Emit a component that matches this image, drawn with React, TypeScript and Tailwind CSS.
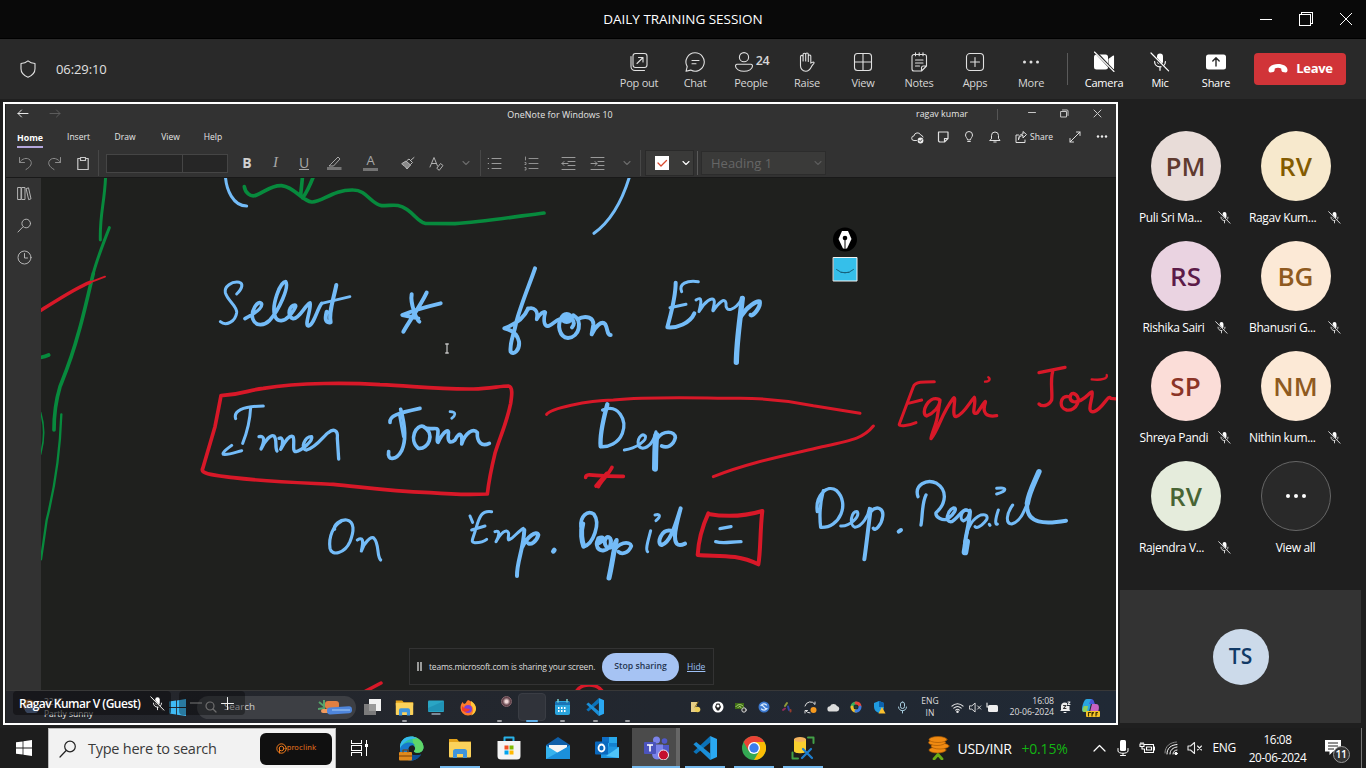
import React from "react";

type P = { children?: React.ReactNode; className?: string };

const Cell = ({ children, className = "" }: P) => (
  <div className={`flex h-full shrink-0 items-center justify-center ${className}`}>{children}</div>
);

const Svg = ({ s = 20, vb = 20, c = "#e0e0e0", w = 1.1, children }: { s?: number; vb?: number; c?: string; w?: number; children: React.ReactNode }) => (
  <svg width={s} height={s} viewBox={`0 0 ${vb} ${vb}`} fill="none" stroke={c} strokeWidth={w} strokeLinecap="round" strokeLinejoin="round" className="block shrink-0">
    {children}
  </svg>
);

const MicOff = ({ s = 20, w = 1.2 }: { s?: number; w?: number }) => (
  <Svg s={s} c="#fff" w={w}>
    <rect x="7" y="1.6" width="6" height="10.6" rx="3" fill="#fff" stroke="none" />
    <path d="M4.6 9.5c0 3.2 2.4 5.3 5.4 5.3s5.4-2.1 5.4-5.3M10 15v3.3" />
    <path d="M2 2.2 17.2 19" stroke="#292929" strokeWidth="2.6" />
    <path d="M1 1 18.6 18.8" />
  </Svg>
);

const Chevron = ({ c = "#6b6b6b", s = 8 }: { c?: string; s?: number }) => (
  <Svg s={s} vb={8} c={c} w={1.1}><path d="M1 2.5 4 5.5 7 2.5" /></Svg>
);

const VsCode = ({ s }: { s: number }) => (
  <svg width={s} height={s} viewBox="0 0 24 24" className="block shrink-0">
    <path d="M17.2 0v6.5L3.2 17.9 0.4 15.8z" fill="#0b72b8" />
    <path d="M17.2 24v-6.5L3.2 6.1.4 8.2z" fill="#1b8fd8" />
    <path d="M17.2 0 24 3v18l-6.800 3z" fill="#2aa8f2" />
  </svg>
);

const Folder = ({ s }: { s: number }) => (
  <svg width={s} height={s} viewBox="0 0 24 24" className="block shrink-0">
    <path d="M1 3h8l2 2.5h12v4H1z" fill="#e3a21a" />
    <rect x="1" y="6" width="22" height="15.5" rx="1" fill="#fbd25b" />
    <path d="M5 22v-6.500q0-2.500 2.500-2.500h9q2.500 0 2.500 2.500V22h-4v-4H9v4z" fill="#3f95dc" />
  </svg>
);

const WinLogo = ({ s, c }: { s: number; c: string }) => (
  <svg width={s} height={s} viewBox="0 0 16 16" fill={c} className="block shrink-0">
    <path d="M0 2.300 6.600 1.400v6.200H0zM7.400 1.300 16 0v7.600H7.400zM0 8.400h6.600v6.200L0 13.700zM7.400 8.400H16V16l-8.600-1.200z" />
  </svg>
);

/* ---------- Meeting toolbar ---------- */

const tools: { label: string; icon: React.ReactNode; extra?: string }[] = [
  { label: "Pop out", icon: <Svg><rect x="4" y="1.500" width="14" height="14" rx="2.500" /><path d="M2 4.500v10A4 4 0 0 0 6 18.500h9.500M8 11.500 14 5.500M9.500 5.500H14V10" /></Svg> },
  { label: "Chat", icon: <Svg><path d="M10 .8a9.200 9.200 0 1 1-4.300 17.300L1 19.300l1.200-4.700A9.200 9.200 0 0 1 10 .8zM7 8.500h7M7 11.800h4" /></Svg> },
  { label: "People", extra: "24", icon: <Svg><circle cx="10" cy="5.200" r="4.600" /><path d="M3 12.200h14a1.600 1.600 0 0 1 1.500 1.800c0 3.200-4 5.300-8.500 5.300s-8.500-2.100-8.500-5.300A1.600 1.600 0 0 1 3 12.200z" /></Svg> },
  { label: "Raise", icon: <Svg><path d="M5 11V4.700a1.300 1.300 0 0 1 2.600 0V9 2.600a1.300 1.300 0 0 1 2.600 0V9 2.300a1.300 1.300 0 0 1 2.600 0V9.500 4a1.300 1.300 0 0 1 2.500 0v7.200c1-.9 2.700-1.500 3.300-.7.500.8-1.500 2.100-2.400 3.700-1.400 3-2.900 5-6 5-3.500 0-5.200-2.800-5.200-5.500z" transform="translate(-1.500 0)" /></Svg> },
  { label: "View", icon: <Svg><rect x="1.500" y="1.500" width="17" height="17" rx="3" /><path d="M10 1.500v17M1.500 10h17" /></Svg> },
  { label: "Notes", icon: <Svg><path d="M5 2.500h10.500a2 2 0 0 1 2 2V14l-5 5H5a2 2 0 0 1-2-2V4.500a2 2 0 0 1 2-2zM17.500 14h-3a2 2 0 0 0-2 2v3M6.500 .8v3M10.200 .8v3M14 .8v3M6.500 8h7.500M6.500 11h7.500M6.500 14h4" /></Svg> },
  { label: "Apps", icon: <Svg><rect x="1.500" y="1.500" width="17" height="17" rx="3.500" /><path d="M10 5.500v9M5.500 10h9" /></Svg> },
  { label: "More", icon: <Svg><g fill="#e0e0e0" stroke="none"><circle cx="3.500" cy="10" r="1.500" /><circle cx="10" cy="10" r="1.500" /><circle cx="16.500" cy="10" r="1.500" /></g></Svg> },
];

const Tool = ({ label, icon, extra, bright }: { label: string; icon: React.ReactNode; extra?: string; bright?: boolean }) => (
  <div className={`flex w-14 shrink-0 flex-col items-center ${bright ? "text-white" : "text-[#d6d6d6]"}`}>
    <div className="flex h-5 items-center gap-[2px]">
      {extra ? <span className="-ml-[3px]">{icon}</span> : icon}
      {extra && <span className="-mr-1 text-[12.5px] font-semibold tracking-[-0.3px]">{extra}</span>}
    </div>
    <span className="mt-[3px] whitespace-nowrap text-[11px] leading-4 tracking-[-0.25px]">{label}</span>
  </div>
);

const TopBars = () => (
  <>
    <header className="flex h-[39px] shrink-0 items-center border-b border-black bg-[#090909]">
      <div className="w-[120px]" />
      <div className="flex-1 text-center text-[13.500px] tracking-[-0.020px] text-white"><span>DAILY TRAINING SESSION</span></div>
      <div className="flex w-[120px] items-center">
        <Cell className="w-10"><Svg s={12} vb={12} c="#fff" w={1}><path d="M0 6.500h12" /></Svg></Cell>
        <Cell className="w-10"><svg width="14" height="14" fill="none" stroke="#fff" shapeRendering="crispEdges"><rect x=".5" y="2.500" width="11" height="11" /><path d="M2.500 2.500V.5h11v11h-2" /></svg></Cell>
        <Cell className="w-10"><Svg s={12} vb={12} c="#fff" w={1}><path d="M0 0 12 12M12 0 0 12" /></Svg></Cell>
      </div>
    </header>
    <div className="flex h-[60px] shrink-0 items-center bg-[#292929]">
      <div className="flex w-[611px] items-center pl-[18px]">
        <Svg><path d="M10 1.800c2.200 1.900 4.400 2.500 7 2.700v5.300c0 4.200-2.800 6.800-7 8.400-4.200-1.600-7-4.200-7-8.400V4.500c2.600-.2 4.800-.8 7-2.700z" /></Svg>
        <span className="ml-[18px] pt-px text-[13px] tracking-[-0.100px] text-[#e0e0e0]">06:29:10</span>
      </div>
      <div className="flex pt-1">
        {tools.map((t) => <Tool key={t.label} {...t} />)}
      </div>
      <div className="ml-2 mr-2 h-8 w-px bg-[#5a5a5a]" />
      <div className="flex pt-1">
        <Tool bright label="Camera" icon={<Svg s={22} vb={22} c="#fff"><rect x="1" y="3.500" width="14" height="15" rx="2.500" fill="#fff" stroke="none" /><path d="M16 8.200 20.500 5v12.500L16 14z" fill="#fff" /><path d="M3 1.500 21.500 21" stroke="#292929" strokeWidth="2.600" /><path d="M1.500 1 21 20.500" /></Svg>} />
        <Tool bright label="Mic" icon={<MicOff />} />
        <Tool bright label="Share" icon={<Svg s={22} vb={22} c="#292929" w={1.4}><rect x="1" y="3.500" width="20" height="15" rx="2.500" fill="#fff" stroke="none" /><path d="M11 15V7M7.800 10 11 6.800 14.200 10" /></Svg>} />
      </div>
      <button className="ml-[10px] flex h-8 w-[92px] items-center justify-center gap-2 rounded bg-[#d13438] pl-px text-[13px] font-bold tracking-[-0.300px] text-white">
        <svg width="20" height="10" viewBox="0 0 20 10"><path d="M10 0c5 0 9.500 2.300 9.500 6 0 1.600-.8 2.600-2 2.400l-2.700-.5c-.9-.2-1.300-.9-1.400-1.700l-.2-1.800c-2-.8-4.400-.8-6.400 0l-.2 1.800c-.1.800-.5 1.500-1.400 1.700l-2.700.5C1.300 8.600.5 7.600.5 6 .5 2.300 5 0 10 0z" fill="#fff" /></svg>
        Leave
      </button>
    </div>
  </>
);

/* ---------- Ink ---------- */

const BLUE = "#74bcf8";
const RED = "#d81828";
const GREEN = "#078a3d";
const K = 1 / 3;

const Ink = () => (
  <svg viewBox="41 178 1075 512" width="1075" height="512" className="block" fill="none" strokeLinecap="round" strokeLinejoin="round">
    <g transform={`translate(0 170) scale(${K})`}>
      <g stroke={GREEN} strokeWidth="11">
        <path strokeWidth="9" d="M317 15C314 100 299 130 301 210M328 173C310 220 290 270 280 310" />
        <path d="M280 310C265 370 250 440 235 490C215 565 200 600 180 650C165 700 162 740 162 780" />
        <path strokeWidth="7" d="M184 733C180 850 160 970 140 1050L123 1168" />
        <path d="M115 563C130 562 136 560 146 555" />
        <path strokeWidth="5" d="M122 728Q140 785 122 852" />
        <path d="M733 50C735 65 750 84 770 75C795 65 815 45 845 47C885 52 905 92 935 96C965 98 1000 58 1060 60C1100 60 1110 100 1145 107C1180 107 1195 100 1220 118C1245 135 1255 155 1275 160L1365 161C1450 155 1560 138 1632 129M908 15L902 75M942 15Q925 60 908 84" />
      </g>
      <path stroke={RED} strokeWidth="10" d="M118 424C180 385 230 352 270 337" />
      <path stroke={RED} strokeWidth="6" d="M270 337L315 320" />
      <g stroke={BLUE} strokeWidth="9">
        <path d="M676 15C678 60 700 108 740 108M1890 15C1865 100 1830 155 1782 190" />
        <path strokeWidth="9" d="M710 372C728 355 730 340 718 337C695 333 672 350 676 368C682 392 712 408 710 428C706 455 678 470 661 455" />
        <path strokeWidth="11" d="M735 446C765 430 790 412 784 400C774 388 750 425 759 448C768 472 795 465 808 452C838 420 868 350 857 335C840 335 815 405 824 435C832 462 855 452 868 438C892 410 890 402 880 406C865 415 862 440 880 446C900 445 915 405 930 399C935 415 912 466 925 468C942 465 952 415 965 400" />
        <path strokeWidth="12" d="M1009 345C1000 390 985 430 992 457C975 460 975 445 980 425" />
        <path strokeWidth="8" d="M965 400L1050 380" />
        <path strokeWidth="9" d="M707 746C700 725 725 708 790 708M752 712C750 750 740 790 728 820M695 826C680 838 665 848 670 853C690 855 710 845 725 842" />
        <path strokeWidth="10" d="M777 800C796 796 793 815 783 837C794 812 812 793 822 798C832 808 824 830 831 843M837 805C852 799 849 825 842 838C855 812 870 794 879 800C886 812 874 845 888 845C905 842 940 812 935 800C915 798 898 838 920 840C950 832 972 796 985 788C1000 775 1015 780 1012 805L1016 867" />
      </g>
      <path stroke={RED} strokeWidth="11" d="M663 677C730 673 745 660 790 655C900 637 1050 638 1140 644C1240 648 1300 658 1420 657C1470 656 1500 648 1525 648C1540 650 1535 680 1532 700C1520 760 1500 800 1485 850Q1468 920 1462 972Q1390 976 1290 968C1150 962 1080 950 1000 943C900 938 800 935 700 923C640 915 600 912 608 896L645 770Q655 720 663 677" />
    </g>
    <g transform={`translate(380 240) scale(${K})`}>
      <g stroke={BLUE} strokeWidth="12">
        <path d="M95 163C90 190 110 240 118 245M140 158C120 200 90 240 70 275M182 190C140 200 90 215 67 225L115 235" />
        <path d="M465 85C450 130 420 200 408 250C400 290 388 310 392 335C400 347 420 330 417 305C412 282 395 270 373 265C400 255 430 240 444 206" />
        <path strokeWidth="11" d="M444 206C462 200 476 212 470 238C480 220 492 212 496 217C488 245 494 261 506 258C520 252 526 242 538 238" />
        <path d="M545 232C530 255 538 292 564 294C598 292 610 242 580 226M575 236C585 245 582 256 576 262M592 238C620 222 642 235 640 255L635 283C645 260 665 240 676 253C685 270 680 285 692 285" />
        <ellipse cx="560" cy="234" rx="20" ry="18" fill={BLUE} stroke="none" />
        <path d="M887 128C887 175 870 230 862 262C890 265 930 250 943 220" />
        <path strokeWidth="9" d="M905 155C895 132 920 120 955 125M870 203L918 193" />
        <path strokeWidth="9" d="M948 180C970 165 962 195 957 215C970 190 1000 163 1003 185C1003 200 995 215 1000 212C1015 190 1035 170 1038 190C1035 220 1065 212 1085 178" />
        <path strokeWidth="16" d="M1087 175C1080 240 1070 300 1069 367" />
        <path strokeWidth="13" d="M1084 228C1100 200 1130 182 1139 185C1143 200 1120 230 1112 225" />
        <path strokeWidth="11" d="M30 547C28 528 50 520 120 505M62 508C75 555 80 600 65 632C50 660 20 665 26 635" />
        <path strokeWidth="8" d="M58 525L70 590" />
        <path strokeWidth="11" d="M132 560C108 550 85 600 115 625C145 630 168 580 130 560C150 575 175 555 174 575C174 590 168 605 174 607C190 575 210 560 205 585C203 605 210 612 225 600C240 570 248 585 245 612C255 580 280 562 292 578C290 605 305 622 328 610" />
        <path strokeWidth="8" d="M210 515C232 515 225 528 215 535" />
        <path strokeWidth="13" d="M682 493C675 520 658 580 662 619" />
        <path strokeWidth="10" d="M668 510C715 490 742 540 727 580C715 610 685 622 662 620" />
        <path strokeWidth="9" d="M733 630C770 625 802 600 796 588C780 572 760 620 788 625C810 622 822 600 828 575" />
        <path strokeWidth="18" d="M829 585C825 620 826 650 825 686" />
        <path strokeWidth="11" d="M832 595C850 570 885 572 886 593C880 618 860 625 845 618" />
        <path strokeWidth="9" d="M270 828L278 847M335 815C305 810 298 830 288 865C278 900 270 906 285 908C300 908 312 905 320 898M275 870L315 858" />
        <path strokeWidth="9" d="M345 875C362 868 357 890 348 905C362 880 380 862 386 880C385 900 380 905 395 895C405 887 420 870 430 865" />
        <path d="M433 870C430 930 410 965 411 1008M425 925C440 890 470 870 475 885C470 905 452 915 445 910" />
        <path strokeWidth="14" d="M520 934L523 930" />
        <path strokeWidth="15" d="M608 852C601 875 606 905 611 918" />
        <path strokeWidth="11" d="M611 920C640 912 662 850 642 823C622 808 600 830 603 860" />
        <path d="M650 912C672 905 675 885 655 895C640 925 665 945 690 920C700 888 677 882 674 905C675 932 700 928 710 900" />
        <path strokeWidth="15" d="M708 905C700 940 695 980 687 1014" />
        <path strokeWidth="11" d="M700 940C712 905 750 902 754 918C745 940 725 945 715 935" />
        <path strokeWidth="9" d="M812 872C805 900 795 930 803 935M825 825C842 820 842 830 828 842" />
        <path strokeWidth="12" d="M872 872C845 865 828 912 845 915C875 905 890 840 902 805C890 850 865 935 915 911" />
        <path strokeWidth="10" d="M1020 866L1053 860M1007 905C1030 912 1050 905 1083 905" />
      </g>
      <g stroke={RED} strokeWidth="11">
        <path d="M617 712C618 697 640 710 730 709" />
        <path strokeWidth="11" d="M696 682C685 705 665 720 655 740" />
        <path strokeWidth="11" d="M680 700L648 738" />
        <path strokeWidth="9" d="M500 523C510 505 620 482 700 480C830 468 960 475 1080 475C1180 475 1240 485 1300 497L1440 520M1000 710C1100 670 1200 650 1320 622C1420 600 1450 595 1480 558" />
        <path strokeWidth="12" d="M985 820C962 870 955 910 953 945C1010 950 1070 940 1135 973C1142 940 1140 870 1147 813C1090 830 1030 830 985 822" />
      </g>
    </g>
    <g transform={`translate(740 220) scale(${K})`}>
      <g stroke={RED} strokeWidth="10">
        <path strokeWidth="9" d="M583 485C550 485 525 485 520 500L478 612C475 620 500 620 528 608M505 550L545 540" />
        <path d="M597 538C565 525 540 580 560 588C580 580 600 560 600 540L592 590C590 610 575 640 573 656C595 630 605 580 640 535C652 522 632 590 648 590C670 585 690 545 703 532C710 550 690 590 712 578C725 560 740 535 736 548C725 580 740 592 770 587" />
        <path strokeWidth="7" d="M735 485C750 485 752 475 745 472" />
        <path d="M897 458L975 442M938 455C930 480 938 520 935 540C925 560 905 560 897 552" />
        <path d="M985 530C960 525 955 565 980 570C1010 575 1030 530 1000 520C990 520 985 540 1000 545C1030 550 1048 515 1056 516C1062 530 1035 580 1062 575C1090 565 1105 520 1112 535L1140 538" />
        <path strokeWidth="7" d="M1055 478C1085 482 1105 475 1100 465" />
      </g>
      <g stroke={BLUE} strokeWidth="10">
        <path d="M250 812C240 850 238 890 242 922C300 925 330 850 290 812C260 790 225 830 232 875" />
        <path strokeWidth="9" d="M302 918C330 920 360 890 352 875C335 870 325 915 345 922C365 920 385 890 388 865" />
        <path strokeWidth="12" d="M392 868C385 920 380 970 373 1018" />
        <path d="M392 875C410 855 432 865 428 890C425 915 405 935 400 925" />
        <path strokeWidth="12" d="M476 935L483 930" />
        <path strokeWidth="10" d="M558 825C545 850 548 890 543 915" />
        <path strokeWidth="10" d="M534 830C522 795 560 775 590 790C622 810 620 850 588 878C585 892 610 905 625 895C640 885 655 862 640 864C622 872 612 908 635 905C655 895 668 862 684 872" />
        <path strokeWidth="9" d="M684 872C666 862 656 900 670 903C680 900 690 885 690 870" />
        <path strokeWidth="12" d="M690 875C688 920 672 960 675 980" />
        <path strokeWidth="20" d="M680 965L675 996" />
        <path strokeWidth="9" d="M678 950C682 920 700 895 722 885C745 880 745 895 735 905C720 922 710 925 705 920" />
        <path d="M748 913L750 916M775 870C765 900 765 915 772 912M770 805C800 800 805 812 770 822" strokeWidth="9" />
        <path d="M818 855C800 880 795 910 815 912C840 905 850 880 862 850" strokeWidth="9" />
        <path d="M897 755C882 790 866 820 862 850" strokeWidth="16" />
        <path d="M862 850C855 915 920 912 978 902" strokeWidth="12" />
      </g>
    </g>
    <g transform={`translate(300 500) scale(${K})`} stroke={BLUE} strokeWidth="9.500">
      <path d="M104 88C100 75 120 58 140 60C165 65 162 95 150 125C135 160 95 170 90 145C85 110 100 75 125 63M172 120C188 110 192 120 184 153C190 130 215 105 222 115C238 130 230 170 242 180" />
    </g>
    <path stroke={RED} strokeWidth="3.500" d="M364 692L381 683M575 694C580 682 598 682 604 694" />
    <path stroke="#e8e8e8" strokeWidth="1" d="M445.500 344h1.500h1.500M447 344v9M445.500 353h3" />
    <circle cx="845" cy="239.500" r="12" fill="#000" />
    <path d="M842 231h6l3.500 8-4.500 9.500h-4l-4.500-9.500z" fill="#fff" />
    <circle cx="845" cy="238" r="2.300" fill="#000" /><path d="M845 239v9" stroke="#000" />
    <rect x="833.500" y="257.500" width="23.500" height="23.500" fill="#35bfea" stroke="#f2f2f2" />
    <path d="M836.500 269.500q8.500 7 17 0M841 272.500h8" stroke="#17627e" />
  </svg>
);

/* ---------- Shared screen: OneNote ---------- */

const Lines = ({ kind }: { kind: "bullet" | "num" | "out" | "in" }) => (
  <Svg s={15} vb={15} c="#9a9a9a" w={1}>
    {kind === "bullet" && <path d="M5 2.500h9M5 7.500h9M5 12.500h9M1.200 2.500h.4M1.200 7.500h.4M1.200 12.500h.4" />}
    {kind === "num" && <path d="M5 2.500h9M5 7.500h9M5 12.500h9M1.500 1v3M1 6.500h1v2H1M1 11.500h1v2.500H1" strokeWidth=".9" />}
    {kind === "out" && <path d="M1 1.500h13M7 5.500h7M7 9.500h7M1 13.500h13M1 7.500h6M3 5.500 1 7.500l2 2" />}
    {kind === "in" && <path d="M1 1.500h13M8 5.500h6M8 9.500h6M1 13.500h13M1 7.500h6M5 5.500l2 2-2 2" />}
  </Svg>
);

const Ribbon = () => (
  <div className="flex h-[74px] shrink-0 flex-col border-b border-[#191919] bg-[#323232] text-[8.500px] text-[#e6e6e6]">
    <div className="flex h-[20px] items-center">
      <Cell className="w-[33px]"><Svg s={12} vb={12} c="#e6e6e6" w={1}><path d="M1 5.500h10M4.500 2 1 5.500 4.500 9" /></Svg></Cell>
      <Cell className="w-[31px]"><Svg s={12} vb={12} c="#5c5c5c" w={1}><path d="M1 5.500h10M7.500 2 11 5.500 7.500 9" /></Svg></Cell>
      <div className="w-[370px]" />
      <Cell className="w-[240px] whitespace-nowrap pt-[2px] text-[8.900px] tracking-[0.050px]">OneNote for Windows 10</Cell>
      <div className="w-[232px]" />
      <Cell className="w-[60px] whitespace-nowrap pt-[2px] text-[8.800px] tracking-[0.050px]">ragav kumar</Cell>
      <div className="h-[11px] w-[26px] border-r border-[#555]" />
      <div className="w-[17px]" />
      <Cell className="w-[33px] pb-[2px]"><Svg s={8} vb={8} c="#c8c8c8" w={1}><path d="M.5 3.500h7" /></Svg></Cell>
      <Cell className="w-[33px] pb-[2px]"><Svg s={9} vb={9} c="#c8c8c8" w={1}><rect x="1" y="2.500" width="5.500" height="5.500" /><path d="M2.500 1H7q1 0 1 1v4.500" /></Svg></Cell>
      <Cell className="w-[33px] pb-[2px]"><Svg s={9} vb={9} c="#c8c8c8" w={1}><path d="M1 1l7 7M8 1 1 8" /></Svg></Cell>
    </div>
    <div className="flex h-[26px] items-center text-[8.500px]">
      <Cell className="w-12"><span className="mt-[4px] border-b-2 border-[#b4a6dc] text-[8.800px] font-bold leading-[16px] text-white">Home</span></Cell>
      <Cell className="w-[49px] pt-px">Insert</Cell>
      <Cell className="w-11 pt-px">Draw</Cell>
      <Cell className="w-[47px] pt-px">View</Cell>
      <Cell className="w-[38px] pt-px">Help</Cell>
      <div className="flex-1" />
      <Cell className="w-[26px]"><Svg s={13} vb={13} w={1}><path d="M5.500 9.500H3a2.300 2.300 0 0 1 0-4.600A3.500 3.500 0 0 1 9.700 4 2.700 2.700 0 0 1 12 6" /><circle cx="9.500" cy="9.500" r="2.900" fill="#eee" stroke="none" /><path d="m8.200 9.500 1 1 1.600-1.800" stroke="#333" /></Svg></Cell>
      <Cell className="w-[26px]"><Svg s={12} vb={12} w={1.2}><path d="M1.500 1h9.500v6.500L7.500 11h-5L1.500 10zM7.500 11V7.500H11" /></Svg></Cell>
      <Cell className="w-[26px]"><Svg s={12} vb={12} w={1}><path d="M4.500 8.500C4.300 7 2.500 6 2.500 4a3.500 3.500 0 0 1 7 0c0 2-1.800 3-2 4.500zM4.700 10.500h2.600" /></Svg></Cell>
      <Cell className="w-[26px]"><Svg s={12} vb={12} w={1}><path d="M1 9.500h10L9.500 7.500V4.500a3.500 3.500 0 0 0-7 0v3zM4.800 11h2.400" /></Svg></Cell>
      <Cell className="w-[52px] gap-[3px] text-[8.500px]"><Svg s={12} vb={12} w={1}><path d="M3.500 4H1v7.500h9V9M3.500 8.500C4 5.500 6 4.500 8 4.500V7l3.500-3.500L8 .5V3C5 3 3.500 5.500 3.500 8.500z" /></Svg><span>Share</span></Cell>
      <Cell className="w-[30px]"><Svg s={12} vb={12} w={1}><path d="M1 11 11 1M7.500 1H11v3.500M1 7.500V11h3.500" /></Svg></Cell>
      <Cell className="w-[24px]"><Svg s={12} vb={12} w={1}><g fill="#eee" stroke="none"><circle cx="2" cy="5.500" r="1.200" /><circle cx="6" cy="5.500" r="1.200" /><circle cx="10" cy="5.500" r="1.200" /></g></Svg></Cell>
      <div className="w-[2px]" />
    </div>
    <div className="flex h-[26px] items-center">
      <Cell className="w-[39px]"><Svg s={15} vb={15} c="#8c8c8c" w={1}><path d="M1.500 1.500v5h5M1.500 6.500C4 2.500 9 1 12 4c3 3.300.5 7-4 9.500" /></Svg></Cell>
      <Cell className="w-[19px]"><Svg s={15} vb={15} c="#8c8c8c" w={1}><path d="M13.500 1.500v5h-5M13.500 6.500C11 2.500 6 1 3 4c-3 3.300-.5 7 4 9.500" /></Svg></Cell>
      <Cell className="ml-[3px] w-8 border-r border-[#474747]"><Svg s={14} vb={14} c="#c8c8c8" w={1.2}><path d="M4 2.500H1.800v11h10.400v-11H10M4.500 1.500h5v3h-5z" /></Svg></Cell>
      <div className="ml-[7px] flex h-[19px] w-[122px] border border-[#454545] bg-[#262626]"><div className="w-[76px] border-r border-[#454545]" /></div>
      <Cell className="w-[38px] pb-[2px] text-[14px] font-bold text-[#d0d0d0]">B</Cell>
      <Cell className="w-[19px] pb-[2px] text-[15px] italic text-[#a8a8a8]"><span className="font-['Liberation_Serif']">I</span></Cell>
      <Cell className="w-[38px] text-[14px] text-[#a8a8a8]"><span className="border-b border-[#a8a8a8] leading-[13px]">U</span></Cell>
      <Cell className="w-[22px]"><Svg s={16} vb={16} c="#a8a8a8" w={1}><path d="M5 9 12 2l2 2-6.500 7H3.500z" /><rect x="1" y="12" width="14.500" height="3" fill="#747474" stroke="none" /></Svg></Cell>
      <Cell className="w-[51px] text-[#a8a8a8]"><div className="flex h-[15px] w-[15px] items-end justify-center border-b-[3px] border-[#747474] pb-[2px] text-[13px] leading-[11px]">A</div></Cell>
      <Cell className="w-6"><Svg s={14} vb={14} c="#bcbcbc" w={1}><path d="M1 7.500 5 5l4.500 4L6 13 4.500 11 3.500 10 2 9z" fill="#8a8a8a" /><path d="M6 4.500 8 3l3.500 3.500-2 2M9.500 4.500 13 1.500" /></Svg></Cell>
      <Cell className="w-8"><Svg s={15} vb={15} c="#b0b0b0" w={1}><path d="M1 11 5 1.500 8.500 10M2.500 7.500h5M8 12l3.500-4.500 2.500 2-3.500 4.500z" /></Svg></Cell>
      <Cell className="w-[29px] border-r border-[#474747]"><Chevron /></Cell>
      <Cell className="w-[27px]"><Lines kind="bullet" /></Cell>
      <Cell className="w-[46px]"><Lines kind="num" /></Cell>
      <Cell className="w-[28px]"><Lines kind="out" /></Cell>
      <Cell className="w-[31px]"><Lines kind="in" /></Cell>
      <Cell className="w-[28px] border-r border-[#474747]"><Chevron /></Cell>
      <div className="ml-[4px] flex h-[26px] w-[49px] items-center justify-between border border-[#2a2a2a] bg-[#3a3a39] pl-[9px] pr-[3px]">
        <Svg s={14} vb={14} c="#d8492e" w={1.3}><rect width="14" height="14" fill="#fff" stroke="none" /><path d="M3 7l3 3 5.500-5.500" /></Svg>
        <Chevron c="#fff" s={8} />
      </div>
      <div className="ml-[3px] h-6 w-px bg-[#5a5a5a]" />
      <div className="ml-[3px] flex h-6 w-[125px] items-center justify-between border border-[#2c2c2c] bg-[#3a3a39] pl-[9px] pr-[3px] text-[13px] text-[#666]"><span className="pt-px">Heading 1</span><Chevron c="#5c5c5c" /></div>
    </div>
  </div>
);

const trayA = [
  <Svg key="a" s={12} vb={12} w={1}><path d="M2 1h6v3l-1 2v5H2z" fill="#e7cf86" stroke="none" /><circle cx="8.500" cy="8.500" r="2.800" fill="#eed05a" stroke="none" /><path d="M9 1 6 6" stroke="#9a7b20" /></Svg>,
  <Svg key="b" s={12} vb={12} w={1}><circle cx="6" cy="6" r="5.500" fill="#fff" stroke="none" /><path d="M4.500 2.500h3L9 6 7 9.500H5L3 6z" fill="#222" stroke="none" /><circle cx="6" cy="5" r="1.500" fill="#fff" stroke="none" /></Svg>,
  <Svg key="c" s={12} vb={12} w={1} c="#b8e080"><path d="M0 2h9v6H0z" fill="#3f6d16" stroke="none" /><path d="M1 5.500C3 3 6 3 8 5M3 6.500c1-1.500 3-1.500 3 0" /><circle cx="9" cy="9" r="2.200" stroke="#d8d8d8" fill="#333" /></Svg>,
  <Svg key="d" s={12} vb={12} w={1.2} c="#d8ebff"><circle cx="6" cy="6" r="5.500" fill="#3c79cf" stroke="none" /><path d="M3 4.500a4 4 0 0 1 5.500-.5M9 7.500a4 4 0 0 1-5.500.5M4 4l4 4" /></Svg>,
  <Svg key="e" s={12} vb={12} w={2}><path d="M4 5 6 2" stroke="#8f9a3a" /><path d="M2 9 4 7.500" stroke="#8f2a5a" /><path d="M7 5.500 8 9" stroke="#2f44a7" /><path d="M9.500 9v1.500" stroke="#963c2c" /></Svg>,
  <Svg key="f" s={13} vb={13} w={1}><path d="M1 5a5.500 5.500 0 0 1 10-1.500V1M1 12V9.500h2.500M1.500 9.500A5 5 0 0 0 6 12" /><circle cx="9.500" cy="9" r="3" fill="#f79a1e" stroke="none" /></Svg>,
  <Svg key="g" s={13} vb={13} c="none"><path d="M3 10.500a2.600 2.600 0 0 1 0-5.200A4 4 0 0 1 10 5a2.800 2.800 0 0 1 0 5.500z" fill="#dcdcdc" /></Svg>,
  <Svg key="h" s={12} vb={12} w={3}><path d="M6 2a4 4 0 0 0-4 4" stroke="#35b05a" /><path d="M2 6a4 4 0 0 0 4 4" stroke="#f2c12b" /><path d="M6 2a4 4 0 0 1 4 3" stroke="#e6453a" /><path d="M6 10a4 4 0 0 0 4-4" stroke="#3c7ee0" /><circle cx="6" cy="6" r="1.500" fill="#243" stroke="none" /></Svg>,
  <Svg key="i" s={13} vb={13} c="none"><path d="M6 0 11 2v4c0 3-2 5-5 6-3-1-5-3-5-6V2z" fill="#1f9be0" /><path d="M6 0 11 2v4H6z" fill="#0b62ad" /><path d="m9 6 3.500 6.500h-7z" fill="#fbc02d" /></Svg>,
  <Svg key="j" s={13} vb={13} w={1} c="#a9cfe0"><rect x="4.500" y="1" width="4" height="6.500" rx="2" /><path d="M2.500 6c0 5 8 5 8 0M6.500 9.800V12" /></Svg>,
];

const Wifi = ({ s = 14 }: { s?: number }) => <Svg s={s} vb={14} w={1.1} c="#e8e8e8"><path d="M1 5.500c3.500-3.500 8.500-3.500 12 0M3 7.700c2.500-2.300 5.500-2.300 8 0M5 9.800c1.200-1.100 2.800-1.100 4 0" /><circle cx="7" cy="11.500" r=".8" fill="#eee" /></Svg>;
const VolOff = ({ s = 13 }: { s?: number }) => <Svg s={s} vb={16} w={1.1} c="#e8e8e8"><path d="M1 6h2.500L7.500 2.500v11L3.500 10H1zM10.500 6l4 4M14.500 6l-4 4" /></Svg>;

const SharedTaskbar = () => (
  <div className="relative flex h-[33px] shrink-0 items-center border-t border-[#383838] bg-[linear-gradient(90deg,#25262b,#22272f_60%,#202935)] text-[8.500px] text-[#dedede]">
    <Cell className="w-[35px] pl-[14px]"><Svg s={18} vb={18} c="none"><circle cx="7" cy="7.500" r="6" fill="#ff9a3a" /><path d="M5 15a4 4 0 0 1 1-7.500c2-3 6-2 7 1a3.200 3.200 0 0 1 0 6.500z" fill="#86acec" /></Svg></Cell>
    <div className="w-[121px] pl-[3px] pt-[2px] leading-[12px] text-[#f0f0f0]"><div>32°C</div><div>Partly sunny</div></div>
    <Cell className="w-[31px]"><WinLogo s={17} c="#3fbaf4" /></Cell>
    <div className="ml-[4px] flex h-[23px] w-[159px] items-center gap-[7px] rounded-full bg-[#3d3f44] px-2 text-[9.800px] text-[#d0d0d0]">
      <Svg s={12} vb={12} c="#aaa" w={1.2}><circle cx="5" cy="5" r="4" /><path d="m8 8 3 3" /></Svg><span className="pt-px">Search</span>
      <svg width="34" height="17" viewBox="0 0 34 17" className="ml-auto -mr-1"><path d="M1 3 7 8M6 1v7M0 10l7-1" stroke="#55a36a" strokeWidth="2" /><rect x="7" y="2" width="14" height="8" rx="3" fill="#e07f42" /><rect x="3" y="10" width="10" height="4" rx="2" fill="#f09a5e" /><rect x="9" y="8" width="25" height="7" rx="3" fill="#4f86dc" transform="rotate(-4 20 11)" /><path d="M14 11h18" stroke="#a8cdf7" /></svg>
    </div>
    <Cell className="w-8"><Svg s={17} vb={17} c="none"><path d="M5 0h12v12H5z" fill="#f2f2f2" /><path d="M0 5h12v11H0z" fill="#8b8b8b" opacity=".85" /></Svg></Cell>
    <Cell className="relative w-8"><Folder s={19} /><i className="absolute bottom-[1px] h-[2px] w-[5px] rounded bg-[#9a9ca0]" /></Cell>
    <Cell className="w-8"><Svg s={16} vb={16} c="none"><rect y="1.500" width="16" height="11.500" rx="1" fill="#2aa5c4" /><path d="M0 9 16 2v10H0z" fill="#1a87ad" opacity=".6" /><path d="M4 15h8" stroke="#9ab" strokeWidth="1.300" /></Svg></Cell>
    <Cell className="w-8"><Svg s={17} vb={17} c="none"><path d="M8 1c5 2 8 5 8 9a7.800 7.800 0 0 1-15.500-1c0-3 1-4.500 2-6l1.500 2L6 4c0-1 1-2 2-3z" fill="#ff7a2a" /><path d="M11 2c4 3 5 5 5 8a7.500 7.500 0 0 1-5 6.500c3-4 3-8 0-10z" fill="#ffc83a" /><circle cx="8" cy="10" r="4" fill="#7b41d8" /><path d="M2 7c3 4 6 2 8 3-1 3-6 4-8 1z" fill="#f6392d" /></Svg></Cell>
    <Cell className="relative w-[33px] items-start pl-[11px] pt-[5px]"><span className="h-[11px] w-[11px] rounded-full border border-[#86666d] bg-[radial-gradient(circle,#f0d8d8_20%,#604048_60%)]" /><i className="absolute bottom-[1px] left-[13px] h-[2px] w-[5px] rounded bg-[#9a9ca0]" /></Cell>
    <Cell className="relative w-[29px]"><span className="h-[28px] w-[28px] rounded-sm border border-[#3a3d44] bg-[#30333a]" /><i className="absolute bottom-[1px] h-[2px] w-3 rounded bg-[#5caee8]" /></Cell>
    <Cell className="relative w-[33px]"><Svg s={17} vb={17} c="none"><rect x="1" y="2" width="15" height="14" rx="2" fill="#2aa4dc" /><path d="M1 3h15v3H1z" fill="#1a73b4" /><path d="M4 0v3M13 0v3" stroke="#7cc" strokeWidth="1.500" /><path d="M4 9h9M4 12h9" stroke="#fff" strokeWidth="1.800" strokeDasharray="1.500 1.500" strokeLinecap="butt" /></Svg><i className="absolute bottom-[1px] h-[2px] w-[5px] rounded bg-[#9a9ca0]" /></Cell>
    <Cell className="relative w-8"><VsCode s={18} /><i className="absolute bottom-[1px] h-[2px] w-[5px] rounded bg-[#9a9ca0]" /></Cell>
    <Cell className="relative w-8"><i className="absolute bottom-[1px] h-[2px] w-[5px] rounded bg-[#9a9ca0]" /></Cell>
    <div className="w-[40px]" />
    {trayA.map((t, i) => <Cell key={i} className="w-[23.100px]">{t}</Cell>)}
    <div className="w-[32px] text-center text-[8.500px] leading-[12px]"><div>ENG</div><div>IN</div></div>
    <Cell className="ml-[3px] w-[18px]"><Wifi s={13} /></Cell>
    <Cell className="w-[18px]"><VolOff s={13} /></Cell>
    <Cell className="w-[16px]"><Svg s={13} vb={13} c="none"><rect x="2" y="4" width="10" height="7" rx="1.500" fill="#eee" /><path d="M1 2v4h4" stroke="#eee" /></Svg></Cell>
    <div className="w-[53px] whitespace-nowrap text-right text-[8.700px] leading-[11.500px] tracking-[-0.1px]"><div>16:08</div><div>20-06-2024</div></div>
    <Cell className="w-[23px]"><Svg s={12} vb={12} c="none"><path d="M2 9V5a4 4 0 0 1 6-3v3h2.500v4l1 1H1z" fill="#eee" /><path d="M4.500 4.500h2.500l-2.500 3h2.500" stroke="#333" /><path d="M9 1h2l-2 2.500h2M5 11.500h2" stroke="#eee" /></Svg></Cell>
    <Cell className="w-[27px]"><Svg s={19} vb={19} c="none"><path d="M6 1h5L8 14H3C0 14 1 9 2 6c1-3 2-5 4-5z" fill="#29a6e0" /><path d="M10 1c3 0 3 3 4 5H8z" fill="#4c55d8" /><path d="M11 6h4c4 0 3 5 2 8H9z" fill="#c961c2" /><path d="M3 8h4l-1 6H3c-2 0-2-3 0-6z" fill="#8fd05a" /><rect x="5" y="13" width="14" height="6" rx="1" fill="#f5c227" /><path d="M7.500 18v-3.500h2M11 18v-3.500h1.500L11.500 16M15 18v-3.500h1.500M15 16h1" stroke="#3a2f00" /></Svg></Cell>
    <div className="absolute left-[7px] top-0 flex h-6 w-[158px] items-center rounded bg-[#101012]/65 pl-[6px] text-white">
      <span className="w-[131px] whitespace-nowrap pt-px text-[12px] font-semibold tracking-[-0.5px]">Ragav Kumar V (Guest)</span><MicOff s={15} />
    </div>
    <div className="absolute left-[173px] top-0 flex h-6 w-[66px] items-center justify-between rounded bg-black/35 px-[11px]">
      <Svg s={12} vb={12} c="#777" w={1}><path d="M0 6h12" /></Svg>
      <Svg s={13} vb={13} c="#f0f0f0" w={1}><path d="M.5 6.500h12M6.500.5v12" /></Svg>
    </div>
  </div>
);

const SharedScreen = () => (
  <div className="ml-[3px] mt-[3px] flex h-[623px] w-[1115px] shrink-0 flex-col border-2 border-white bg-[#1f201e] pl-px">
    <Ribbon />
    <div className="relative flex h-[512px] shrink-0">
      <div className="flex w-[35px] shrink-0 flex-col items-center gap-[17px] bg-[#323232] pl-[2px] pt-2">
        <Svg s={15} vb={15} c="#b4b4b4" w={1}><path d="M1 1.500h3v12H1zM5 1.500h3v12H5zM9.500 2.500l2-.7 2.500 11-2 .7z" /></Svg>
        <Svg s={15} vb={15} c="#b4b4b4" w={1}><circle cx="9.200" cy="5.500" r="4.300" /><path d="M6 8.800 1 14" /></Svg>
        <Svg s={15} vb={15} c="#b4b4b4" w={1}><circle cx="7.500" cy="7.500" r="6.500" /><path d="M7.500 3.500v4.500H10.500" /></Svg>
      </div>
      <Ink />
      <div className="absolute left-[403px] top-[470px] flex h-[37px] w-[305px] items-center border border-[#333] bg-[#1f201f] pl-[7px] text-[8.500px] text-[#dcdcdc]">
        <svg width="5" height="9" className="mr-[7px]"><path d="M1 0v9M4 0v9" stroke="#ddd" strokeWidth="1.300" /></svg>
        <span className="w-[173px] whitespace-nowrap pt-px tracking-[-0.200px]">teams.microsoft.com is sharing your screen.</span>
        <span className="flex h-7 w-[77px] shrink-0 items-center justify-center rounded-full bg-[#a6c3f3] pt-px text-[8.700px] font-semibold text-[#24344f]">Stop sharing</span>
        <span className="ml-[8px] pt-px text-[#9dc0f5] underline">Hide</span>
      </div>
    </div>
    <SharedTaskbar />
  </div>
);

/* ---------- Participants ---------- */

const people = [
  { i: "PM", n: "Puli Sri Ma...", c: "bg-[#e8dcd8] text-[#5f3a2f]", w: "w-[72px]" },
  { i: "RV", n: "Ragav Kum...", c: "bg-[#f7e9cd] text-[#835b00]", w: "w-[72px]" },
  { i: "RS", n: "Rishika Sairi", c: "bg-[#ead3e1] text-[#5c1b48]", w: "w-[65px]" },
  { i: "BG", n: "Bhanusri G...", c: "bg-[#fce9d6] text-[#8f5a20]", w: "w-[72px]" },
  { i: "SP", n: "Shreya Pandi", c: "bg-[#fbddd8] text-[#8b3427]", w: "w-[71px]" },
  { i: "NM", n: "Nithin kum...", c: "bg-[#fce9d6] text-[#8f5a20]", w: "w-[72px]" },
  { i: "RV", n: "Rajendra V...", c: "bg-[#e5ecdc] text-[#486434]", w: "w-[72px]" },
];

const Participants = () => (
  <aside className="flex w-[246px] flex-col pl-[2px]">
    <div className="ml-[11px] mt-8 grid w-[220px] grid-cols-2">
      {people.map((p, k) => (
        <div key={k} className="flex h-[110px] flex-col items-center">
          <div className={`flex h-[70px] w-[70px] items-center justify-center rounded-full pr-px text-[26px] font-semibold ${p.c}`}>{p.i}</div>
          <div className="mt-2 flex h-4 items-center gap-[7px] pr-[2px] text-[12px] text-white">
            <span className={`whitespace-nowrap pt-[2px] tracking-[-0.370px] ${p.w}`}>{p.n}</span>
            <MicOff s={13} />
          </div>
        </div>
      ))}
      <div className="flex h-[110px] flex-col items-center">
        <div className="flex h-[70px] w-[70px] items-center justify-center gap-1 rounded-full border border-[#666] bg-[#292929]">
          <i className="h-1 w-1 rounded-full bg-white" /><i className="h-1 w-1 rounded-full bg-white" /><i className="h-1 w-1 rounded-full bg-white" />
        </div>
        <div className="mt-[9px] h-4 pr-px text-[12px] leading-4 tracking-[-0.300px] text-white">View all</div>
      </div>
    </div>
    <div className="mt-[19px] flex h-[133px] w-[241px] items-center justify-center bg-[#333]">
      <div className="flex h-14 w-14 items-center justify-center rounded-full bg-[#ccdaea] pt-px text-[21px] font-semibold text-[#123a66]">TS</div>
    </div>
  </aside>
);

/* ---------- Taskbar ---------- */

const AppCell = ({ children, line }: { children: React.ReactNode; line?: boolean }) => (
  <div className="relative flex h-10 w-[49px] shrink-0 items-center justify-center">
    {children}
    {line && <i className="absolute bottom-0 h-[2px] w-10 bg-[#76b9ed]" />}
  </div>
);

const Taskbar = () => (
  <footer className="mt-[3px] flex h-10 shrink-0 items-center bg-[#1d1d1d] text-white">
    <Cell className="w-12"><WinLogo s={16} c="#fff" /></Cell>
    <div className="flex h-10 w-[288px] items-center border border-[#b9b9b9] border-b-0 bg-[#f2f2f2] pl-[10px] text-[14.500px] text-[#3a3a3a]">
      <Svg s={18} vb={18} c="#222" w={1.2}><circle cx="11" cy="6.500" r="5.300" /><path d="M7.200 10.500 1 17" /></Svg>
      <span className="ml-[11px] w-[172px] whitespace-nowrap tracking-[-0.250px]">Type here to search</span>
      <span className="flex h-8 w-[72px] items-center justify-center rounded-md bg-[#101010] font-['DejaVu_Sans'] text-[7.300px] tracking-[0.1px] text-[#e8721c]">
        <Svg s={11} vb={11} c="#f07a1c" w={1}><circle cx="5.500" cy="5.500" r="4.700" /><circle cx="5.500" cy="5.500" r="2.300" /><path d="M3.500 5.500V10" /></Svg>proclink
      </span>
    </div>
    <Cell className="w-[50.500px] pr-[3px]"><svg width="17" height="16" fill="none" stroke="#fff" shapeRendering="crispEdges"><path d="M.5 0v3.500h10V0M.5 16v-3.500h10V16M.5 5.500h10v5H.5zM15.500 0v16" /><path d="M14 4h3v3h-3z" fill="#fff" stroke="none" /></svg></Cell>
    <AppCell><Svg s={25} vb={25} c="none"><path d="M1 10C2 3 8 0 13 .5c7 .5 12 6 11.500 11.500-.5 4-4 5.500-8 4.500-2-.5-2-1-1-2 2-3-1-6.500-5-6.500-5 0-8 3-9.500 7z" fill="#2fc0a0" /><path d="M13 .5c7 .5 12 6 11.500 11.500-.5 4-4 5.500-8 4.500-2-.5-2-1-1-2 2-3 0-5-1-6z" fill="#5fd668" /><path d="M1 10C2 3 8 0 13 .5c2 0 4 1 5 2C10 2 4 6 1 13z" fill="#35b9ee" /><path d="M1 13c1-4 5-6.500 9-6.500 3 0 5 1 6 3-3-1-6 0-6.500 3C9 18 15 21 22 18.500 19 23 15 24.500 12 24.500 5 24.500 .5 19 1 13z" fill="#1679cc" /><path d="M9.500 12.500C9 18 15 21 22 18.500 19 23 15 24.500 12 24.500c-5-3-5-9-2.500-12z" fill="#0d4f98" /><rect y="16" width="13" height="8.500" rx="1" fill="#e08a1e" /><path d="M4 16v-2h5v2M0 20h13" stroke="#7a3f05" /></Svg></AppCell>
    <AppCell line><Folder s={24} /></AppCell>
    <AppCell><Svg s={24} vb={24} c="none"><path d="M7.500 6V1.500h9V6" stroke="#29b2e8" strokeWidth="2" /><path d="M.5 5h23v15q0 3.500-3.500 3.500H4Q.5 23.500.5 20z" fill="#f4f4f4" /><path d="M7.500 9.500h4v4h-4z" fill="#f25022" /><path d="M12.500 9.500h4v4h-4z" fill="#7fba00" /><path d="M7.500 14.500h4v4h-4z" fill="#00a4ef" /><path d="M12.500 14.500h4v4h-4z" fill="#ffb900" /></Svg></AppCell>
    <AppCell><Svg s={24} vb={24} c="none"><path d="M0 9 12 1l12 8v14H0z" fill="#0f5fa8" /><path d="M3 9h18v8H3z" fill="#f4f4f4" /><path d="M0 9.500 12 17l12-7.500V23H0z" fill="#36b3ee" /><path d="M0 23 24 9.500V23z" fill="#1b90dc" /></Svg></AppCell>
    <AppCell><Svg s={24} vb={24} c="none"><path d="M7 1h15v12H7z" fill="#28a8ea" /><path d="M7 1h7v6H7z" fill="#0f6fc6" /><path d="M14 7h8v6h-8z" fill="#1482d0" /><path d="M6 10 24 11v11H6z" fill="#1e96e0" /><path d="m24 11-13 9 13 2z" fill="#4fc3f7" /><rect y="5.500" width="13" height="13" rx="1" fill="#0a68bd" /><ellipse cx="6.500" cy="12" rx="3" ry="3.500" stroke="#fff" strokeWidth="1.800" /></Svg></AppCell>
    <div className="relative ml-[0.500px] mr-[0.500px] flex h-10 w-[48px] shrink-0 items-center justify-center border-r-[4px] border-[#666] bg-[#4b4b4b] pl-1">
      <svg width="25" height="24" viewBox="0 0 25 24"><circle cx="12.500" cy="4" r="3.500" fill="#7b83eb" /><circle cx="20.500" cy="5" r="2.800" fill="#5059c9" /><path d="M16 9h9v8q0 4-5 4h-4z" fill="#5059c9" /><path d="M8 8.500h11V17q0 6-6 6.500-5-.5-5-6.500z" fill="#7b83eb" /><rect y="6" width="12" height="12" rx="1" fill="#4b53bc" /><path d="M3 9h6M6 9v6.500" stroke="#fff" strokeWidth="1.600" /><circle cx="19.500" cy="19" r="5" fill="#c50f2e" stroke="#eee" /></svg>
      <i className="absolute bottom-0 left-0 h-[2px] w-[48px] bg-[#76b9ed]" />
    </div>
    <AppCell line><VsCode s={24} /></AppCell>
    <AppCell line><svg width="24" height="24" viewBox="0 0 24 24"><circle cx="12" cy="12" r="12" fill="#34a853" /><path d="M12 12 17.200 15 12 24A12 12 0 0 0 22.400 6H12z" fill="#fbbc05" /><path d="M12 12 6.800 15 1.600 6A12 12 0 0 1 22.400 6H12z" fill="#ea4335" /><circle cx="12" cy="12" r="6" fill="#fff" /><circle cx="12" cy="12" r="4.700" fill="#3b7ded" /></svg></AppCell>
    <AppCell line><Svg s={24} vb={24} c="none"><path d="M3 3v12c0 3 12 3 12 0V3z" fill="#f9cf2f" /><ellipse cx="9" cy="3.500" rx="6" ry="2.500" fill="#f3b35d" /><path d="M17 1.500h5.500V7M1.500 16.500v6H7" stroke="#43a047" strokeWidth="2" /><path d="m11 22 9-9M12 13l9 9" stroke="#1e7fd0" strokeWidth="2.200" /></Svg></AppCell>
    <div className="w-[98px]" />
    <Svg s={24} vb={24} c="none"><g fill="#f08a12" stroke="#a85a05" strokeWidth=".7"><ellipse cx="11.500" cy="14" rx="8.500" ry="3" /><ellipse cx="14" cy="10" rx="9" ry="3" /><ellipse cx="11" cy="6.500" rx="8.500" ry="3" /><ellipse cx="12" cy="3.500" rx="9" ry="3" /></g><path d="m8 23 4-4.500 4 4.500" stroke="#6bab14" strokeWidth="2.800" /></Svg>
    <span className="ml-[8px] w-[64px] whitespace-nowrap text-[14px] tracking-[-0.300px]">USD/INR</span>
    <span className="w-[71px] whitespace-nowrap text-[14px] tracking-[-0.200px] text-[#13b413]">+0.15%</span>
    <Svg s={13} vb={13} c="#fff" w={1.2}><path d="m1 9 5.500-5.500L12 9" /></Svg>
    <Cell className="ml-[5px] w-[24px]"><Svg s={16} vb={16} c="#fff" w={1}><rect x="5" y="0" width="6" height="11" rx="1.500" fill="#fff" stroke="none" /><path d="M3 8.500v2.500c0 3 10 3 10 0V8.500M8 13.500V15M5.500 15.500h5" /></Svg></Cell>
    <Cell className="w-[25px]"><Svg s={16} vb={16} c="#fff" w={1.1}><path d="M5.500 4.500h9v8h-9V9M14.500 7h1v3M7.500 7h5v3h-5zM1 4h4v2.500H1zM2 2.500V4M4 2.500V4M3 6.500V9h2.500" /></Svg></Cell>
    <Cell className="w-[24px]"><Svg s={15} vb={15} c="#fff" w={1}><path d="M3 13C3 7 7 4 13 3.500M6 13c0-4 3-6.500 7-7M9 13c0-2 1.500-4 4-4" /><path d="M1 12C1 5 6 1.500 12.500 1" stroke="#888" /><circle cx="12" cy="12.500" r="1.200" fill="#fff" /></Svg></Cell>
    <Cell className="w-[22px]"><VolOff s={16} /></Cell>
    <span className="ml-[7px] w-[31px] text-[12px] tracking-[-0.400px]">ENG</span>
    <div className="w-[68px] whitespace-nowrap pb-px text-center text-[11.800px] leading-[18px] tracking-[-0.400px]"><div>16:08</div><div>20-06-2024</div></div>
    <div className="relative ml-[13px] h-[26px] w-[30px] pt-1">
      <svg width="17" height="17" viewBox="0 0 17 17"><path d="M0 1h16v11.500H8L4.500 16v-3.500H0z" fill="#fff" /><path d="M3 4h10M3 7h10M3 10h6" stroke="#222" /></svg>
      <span className="absolute left-[8px] top-[11px] flex h-[17px] w-[17px] items-center justify-center rounded-full border border-[#999] bg-[#333] text-[10.500px] font-semibold tracking-[-0.5px]">11</span>
    </div>
    <div className="ml-auto mr-[4px] h-10 w-px bg-[#777]" />
  </footer>
);

export default function App() {
  return (
    <div className="flex h-[768px] w-[1366px] flex-col overflow-hidden bg-[#1f1f1f] font-['Open_Sans',sans-serif]">
      <TopBars />
      <main className="flex h-[626px] shrink-0">
        <SharedScreen />
        <Participants />
      </main>
      <Taskbar />
    </div>
  );
}
